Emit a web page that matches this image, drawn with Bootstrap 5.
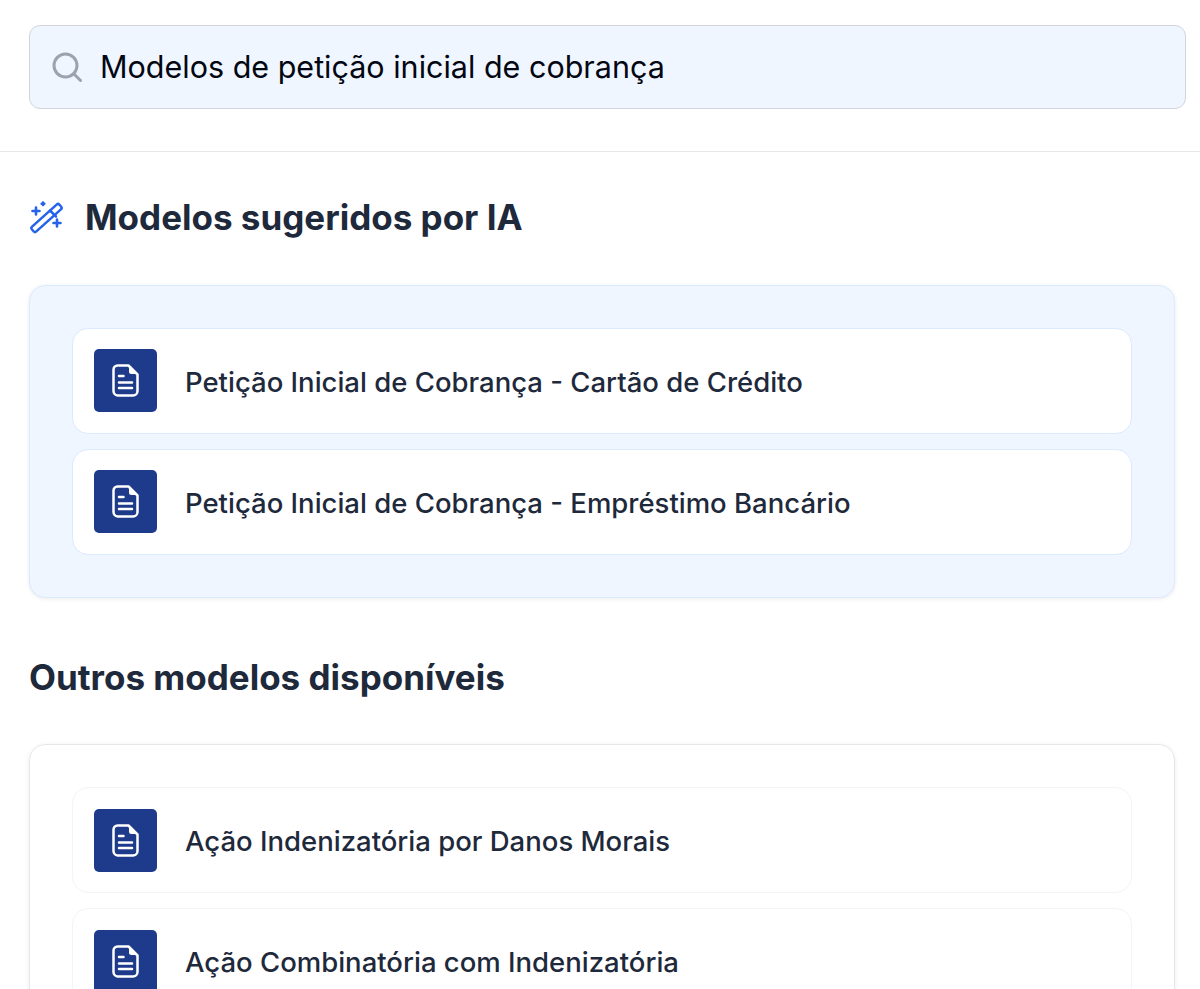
<!DOCTYPE html>
<html lang="pt-BR">
<head>
  <meta charset="UTF-8" />
  <meta name="viewport" content="width=device-width, initial-scale=1.0"/>
  <title>Modelos</title>
  <link href="https://cdn.jsdelivr.net/npm/bootstrap@5.3.0/dist/css/bootstrap.min.css" rel="stylesheet"/>
  <style>
    html, body { height: 989px; overflow: hidden; }
    body { font-family: Inter, "Liberation Sans", sans-serif; color: #1e293b; background: #fff; }
    .search-area { padding: 25px 14px 42px 29px; border-bottom: 1px solid #e5e7eb; }
    .search-box { height: 84px; background: #eff6ff; border: 1px solid #d1d5db; border-radius: 11px; padding: 0 21px; gap: 17px; }
    .search-box input { flex: 1; min-width: 0; border: 0; outline: 0; background: transparent; padding: 0; font-size: 30.5px; color: #030712; }
    .content-area { padding: 0 25px 0 29px; }
    .sec-title { font-size: 35px; font-weight: 700; color: #1e293b; margin: 0; line-height: 44px; }
    .ai-head { padding-top: 43px; margin-bottom: 46px; gap: 21px; }
    .plain-head { margin: 57px 0 45px; }
    .model-panel { border: 1px solid #e5e7eb; border-radius: 16px; padding: 42px; gap: 15px; box-shadow: 0 1px 4px rgba(0,0,0,.08); }
    .panel-ai { background: #eff6ff; border-color: #dbeafe; }
    .model-row { height: 106px; background: #fff; border: 1px solid #f3f4f6; border-radius: 16px; padding: 0 21px; gap: 28px; }
    .panel-ai .model-row { border-color: #dbeafe; padding-bottom: 1px; }
    .doc-tile { width: 63px; height: 63px; background: #1e3a8a; border-radius: 5px; flex-shrink: 0; }
    .row-label { font-size: 27.5px; font-weight: 500; color: #1e293b; padding-top: 4px; }
  </style>
</head>
<body>
  <svg class="d-none">
    <symbol id="doc-icon" viewBox="0 0 27 33">
      <path d="M5.500 1.500h11l9 9v16.500a4.500 4.500 0 0 1-4.500 4.500H5.500A4.500 4.500 0 0 1 1.500 27V5.500a4 4 0 0 1 4-4z" fill="none" stroke="#fff" stroke-width="2.500" stroke-linejoin="round"/>
      <path d="M17 2.500l7.500 7.500h-5a2.500 2.500 0 0 1-2.500-2.500z" fill="#fff"/>
      <path d="M7 12h4.500M7 18.500h13M7 24h13" fill="none" stroke="#fff" stroke-width="2.500" stroke-linecap="round"/>
    </symbol>
  </svg>

  <div class="search-area">
    <div class="search-box d-flex align-items-center">
      <svg width="32" height="32" viewBox="0 0 32 32" fill="none" stroke="#9ca3af" stroke-width="3" stroke-linecap="round"><circle cx="14.500" cy="14.500" r="11.500"/><path d="M23 23l6.500 6.500"/></svg>
      <input type="text" value="Modelos de petição inicial de cobrança"/>
    </div>
  </div>

  <div class="content-area">
    <div class="ai-head d-flex align-items-center">
      <svg width="35" height="35" viewBox="0 0 35 35" fill="none" stroke="#2563eb" stroke-linejoin="round" stroke-linecap="round">
        <g stroke-width="2.500">
          <rect x="-18.500" y="-3.200" width="37" height="6.400" rx="2" transform="translate(17.500 18) rotate(-42)"/>
          <path d="M21 10.500l6 6"/>
        </g>
        <path d="M7 7.500v7M3.500 11h7M14 2.500v2.500M12.700 3.700h2.600M28 19.500v7M24.500 23h7" stroke-width="2.600"/>
      </svg>
      <h2 class="sec-title">Modelos sugeridos por IA</h2>
    </div>

    <div class="model-panel panel-ai d-flex flex-column">
      <div class="model-row d-flex align-items-center">
        <div class="doc-tile d-flex align-items-center justify-content-center"><svg width="27" height="33"><use href="#doc-icon"/></svg></div>
        <span class="row-label">Petição Inicial de Cobrança - Cartão de Crédito</span>
      </div>
      <div class="model-row d-flex align-items-center">
        <div class="doc-tile d-flex align-items-center justify-content-center"><svg width="27" height="33"><use href="#doc-icon"/></svg></div>
        <span class="row-label">Petição Inicial de Cobrança - Empréstimo Bancário</span>
      </div>
    </div>

    <h2 class="sec-title plain-head">Outros modelos disponíveis</h2>

    <div class="model-panel d-flex flex-column">
      <div class="model-row d-flex align-items-center">
        <div class="doc-tile d-flex align-items-center justify-content-center"><svg width="27" height="33"><use href="#doc-icon"/></svg></div>
        <span class="row-label">Ação Indenizatória por Danos Morais</span>
      </div>
      <div class="model-row d-flex align-items-center">
        <div class="doc-tile d-flex align-items-center justify-content-center"><svg width="27" height="33"><use href="#doc-icon"/></svg></div>
        <span class="row-label">Ação Combinatória com Indenizatória</span>
      </div>
    </div>
  </div>

  <script src="https://cdn.jsdelivr.net/npm/bootstrap@5.3.0/dist/js/bootstrap.bundle.min.js"></script>
</body>
</html>
